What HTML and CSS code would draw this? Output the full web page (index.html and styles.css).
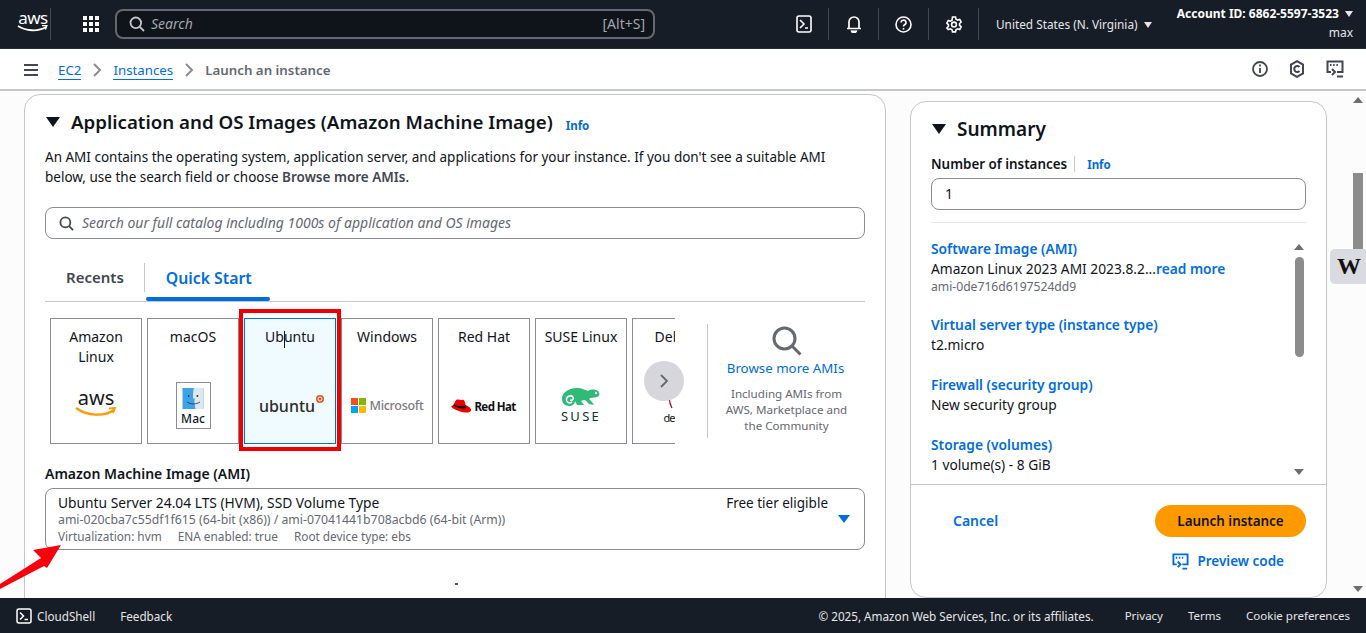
FILE: index.html
```html
<!DOCTYPE html>
<html lang="en">
<head>
  <meta charset="UTF-8">
  <title>Launch an instance | EC2</title>
  <link rel="stylesheet" href="styles.css">
</head>
<body>
<header class="topnav">
  <div class="aws-logo">
    <span class="aws-word">aws</span>
    <svg width="32" height="8" viewBox="0 0 32 8"><path d="M1 1c8 5 20 6 28 1" fill="none" stroke="#fff" stroke-width="1.8"/><path d="M25 .6l5-.4-1.6 4.4" fill="none" stroke="#fff" stroke-width="1.4"/></svg>
  </div>
  <div class="nav-sep sep-logo"></div>
  <svg class="grid-icon" width="16" height="16" viewBox="0 0 16 16" fill="#fff">
    <rect width="4" height="4"/><rect x="6" width="4" height="4"/><rect x="12" width="4" height="4"/>
    <rect y="6" width="4" height="4"/><rect x="6" y="6" width="4" height="4"/><rect x="12" y="6" width="4" height="4"/>
    <rect y="12" width="4" height="4"/><rect x="6" y="12" width="4" height="4"/><rect x="12" y="12" width="4" height="4"/>
  </svg>
  <div class="nav-search">
    <svg width="16" height="16" viewBox="0 0 16 16" fill="none" stroke="#c6c6cd" stroke-width="1.8"><circle cx="6.8" cy="6.8" r="5.3"/><path d="M10.8 10.8l4.2 4.2"/></svg>
    <span class="nav-search-text">Search</span>
    <span class="nav-shortcut">[Alt+S]</span>
  </div>
  <div class="nav-icon icon-first">
    <svg width="16" height="18" viewBox="0 0 16 18" fill="none" stroke="#fff" stroke-width="1.6"><rect x="1" y="1" width="14" height="16" rx="2"/><path d="M4 5l4 4-4 4M9 13h3"/></svg>
  </div>
  <div class="nav-icon">
    <svg width="16" height="18" viewBox="0 0 16 18" fill="none" stroke="#fff" stroke-width="1.7"><path d="M3 13V7a5 5 0 0 1 10 0v6M1 13.5h14"/><path d="M5.5 15.5a2.5 2 0 0 0 5 0" fill="#fff"/></svg>
  </div>
  <div class="nav-icon">
    <svg width="17" height="17" viewBox="0 0 17 17" fill="none" stroke="#fff" stroke-width="1.6"><circle cx="8.5" cy="8.5" r="7.5"/><path d="M6 6.5a2.5 2.4 0 1 1 3.6 2.2c-.8.4-1.100.9-1.100 1.800"/><path d="M8.500 12v1.600"/></svg>
  </div>
  <div class="nav-icon">
    <svg width="16" height="17" viewBox="0 0 16 17" fill="none" stroke="#fff" stroke-width="1.6"><path d="M6.500 1h3l.5 2.200 1.600.9 2.100-.7 1.500 2.600-1.600 1.500v1.900l1.600 1.500-1.500 2.600-2.100-.7-1.600.9-.5 2.200h-3l-.5-2.200-1.600-.9-2.100.7L.8 12l1.600-1.500V8.600L.8 7.100l1.500-2.600 2.100.7L6 4.300z"/><circle cx="8" cy="8.500" r="2.400"/></svg>
  </div>
  <div class="nav-region">United States (N. Virginia) <span class="caret-small"></span></div>
  <div class="nav-account">
    <div class="acct-id">Account ID: 6862-5597-3523 <span class="caret-small"></span></div>
    <div class="acct-user">max</div>
  </div>
</header>

<nav class="crumbbar">
  <div class="hamburger"><span></span><span></span><span></span></div>
  <a class="crumb-link crumb-ec2">EC2</a>
  <svg class="crumb-chev" width="10" height="14" viewBox="0 0 10 14" fill="none" stroke="#8c8c94" stroke-width="2"><path d="M2 1l6 6-6 6"/></svg>
  <a class="crumb-link">Instances</a>
  <svg class="crumb-chev" width="10" height="14" viewBox="0 0 10 14" fill="none" stroke="#8c8c94" stroke-width="2"><path d="M2 1l6 6-6 6"/></svg>
  <span class="crumb-current">Launch an instance</span>
  <div class="crumb-icons">
    <svg width="16" height="16" viewBox="0 0 16 16" fill="none" stroke="#424650" stroke-width="1.8"><circle cx="8" cy="8" r="7"/><path d="M8 7v5M8 3.600v2"/></svg>
    <svg width="16" height="18" viewBox="0 0 16 18" fill="none" stroke="#424650" stroke-width="2"><path d="M8 1.200l6 3.400v8.800l-6 3.400-6-3.400V4.600z"/><path d="M10.500 7a3 3 0 1 0 0 4"/></svg>
    <svg width="18" height="18" viewBox="0 0 18 18" fill="none" stroke="#424650" stroke-width="2"><path d="M5 12H1.500V1.500h15V12H11"/><path d="M4 5h1.500M7.200 5h1.500M10.400 5h1.500"/><path d="M6 9l3 3-3 3M11 16.500h6"/></svg>
  </div>
</nav>

<main class="content">
  <div class="left-col">
    <section class="card ami-card">
      <div class="card-head">
        <span class="caret-big"></span>
        <h2 class="card-title">Application and OS Images (Amazon Machine Image)</h2>
        <a class="info-link">Info</a>
      </div>
      <p class="card-desc">An AMI contains the operating system, application server, and applications for your instance. If you don't see a suitable AMI below, use the search field or choose <b>Browse more AMIs</b>.</p>
      <div class="catalog-search">
        <svg width="15" height="15" viewBox="0 0 16 16" fill="none" stroke="#424650" stroke-width="1.900"><circle cx="6.800" cy="6.800" r="5.300"/><path d="M10.800 10.800l4.200 4.200"/></svg>
        <span>Search our full catalog including 1000s of application and OS images</span>
      </div>
      <div class="tabs">
        <div class="tab">Recents</div>
        <div class="tab tab-active">Quick Start</div>
      </div>
      <div class="picker">
        <div class="tile-strip">
          <div class="tile">
            <div class="tile-name">Amazon Linux</div>
            <div class="tile-logo">
              <svg width="44" height="30" viewBox="0 0 44 30">
                <text x="22" y="16" class="logo-aws">aws</text>
                <path d="M2 19c11 8 28 9 38 2" fill="none" stroke="#f90" stroke-width="2.200"/>
                <path d="M35 19.500l6-.5-2 5" fill="none" stroke="#f90" stroke-width="1.800"/>
              </svg>
            </div>
          </div>
          <div class="tile">
            <div class="tile-name">macOS</div>
            <div class="tile-logo logo-mac">
              <div class="mac-box">
                <svg width="24" height="24" viewBox="0 0 24 24"><rect width="24" height="24" fill="#3ba4e6"/><path d="M13 0h11v24H15c-1-4-2-8-1-12h-2c0-4 0-8 1-12z" fill="#dfe7ee"/><circle cx="7" cy="9" r="1" fill="#123"/><circle cx="17" cy="9" r="1" fill="#123"/><path d="M5 16c5 3 10 3 15 0" stroke="#235" fill="none"/></svg>
                <span>Mac</span>
              </div>
            </div>
          </div>
          <div class="tile tile-selected">
            <div class="tile-name">Ubuntu</div>
            <span class="text-cursor"></span>
            <div class="tile-logo">
              <span class="logo-ubuntu">ubuntu</span><svg class="ubuntu-dot" width="8" height="8" viewBox="0 0 8 8"><circle cx="4" cy="4" r="4" fill="#e95420"/><circle cx="4" cy="4" r="2" fill="none" stroke="#fff"/></svg>
            </div>
          </div>
          <div class="tile">
            <div class="tile-name">Windows</div>
            <div class="tile-logo logo-ms">
              <svg width="15" height="15" viewBox="0 0 15 15"><rect width="7" height="7" fill="#f25022"/><rect x="8" width="7" height="7" fill="#7fba00"/><rect y="8" width="7" height="7" fill="#00a4ef"/><rect x="8" y="8" width="7" height="7" fill="#ffb900"/></svg>
              <span>Microsoft</span>
            </div>
          </div>
          <div class="tile">
            <div class="tile-name">Red Hat</div>
            <div class="tile-logo logo-rh">
              <svg width="21" height="16" viewBox="0 0 21 16"><path d="M6 1c2-1 4 0 6 0 2-1 3 1 3.500 5 2 .800 5 2.500 5.500 4.500.300 2-2 3.500-6 3C10 13 3 10 1.500 8c-.500-1 .500-1.500 1.500-1.500z" fill="#e00"/><path d="M3 6.500c3 2 8 3.500 12.700 3 .300-.700.200-1.800-.200-3-3 .700-8 .700-10.500-.800z" fill="#111"/></svg>
              <span>Red Hat</span>
            </div>
          </div>
          <div class="tile">
            <div class="tile-name">SUSE Linux</div>
            <div class="tile-logo logo-suse">
              <svg width="38" height="18" viewBox="0 0 38 18"><path d="M0 11C0 4 7 0 15 0c5 0 8 2 11 3 2-2 7-2 10 0 2 2 2 5-1 6-3 1-6 0-8 2 2 2 4 4 5 6l-5-1c-2-2-3-4-5-4l-3 1 3 4h-7l-2-4c0 3-3 5-6 5-4 0-7-3-7-7z" fill="#30ba78"/><path d="M10 14c-3 2-6 0-5.500-3 .500-3 4.500-4 6.500-2 1 2-1 4-3 3" fill="none" stroke="#fff" stroke-width="1.600"/><circle cx="34" cy="5" r="1.200" fill="#fff"/></svg>
              <span>SUSE</span>
            </div>
          </div>
          <div class="tile">
            <div class="tile-name">Debian</div>
            <div class="tile-logo logo-deb">
              <svg width="28" height="20" viewBox="0 0 28 20"><path d="M11 1C6 3 3 10 8 19" fill="none" stroke="#a80030" stroke-width="1.200"/></svg>
              <span>debian</span>
            </div>
          </div>
        </div>
        <div class="next-btn">
          <svg width="10" height="14" viewBox="0 0 10 14" fill="none" stroke="#656871" stroke-width="1.800"><path d="M2 1l6 6-6 6"/></svg>
        </div>
        <div class="browse">
          <svg width="30" height="30" viewBox="0 0 30 30" fill="none" stroke="#656871" stroke-width="3"><circle cx="12.500" cy="12.500" r="10.500"/><path d="M20 20l8.500 8.500"/></svg>
          <a class="browse-link">Browse more AMIs</a>
          <p class="browse-note">Including AMIs from AWS, Marketplace and the Community</p>
        </div>
      </div>
      <div class="ami-label">Amazon Machine Image (AMI)</div>
      <div class="ami-select">
        <div class="ami-select-top">
          <span class="ami-name">Ubuntu Server 24.04 LTS (HVM), SSD Volume Type</span>
          <span class="ami-free">Free tier eligible</span>
        </div>
        <div class="ami-meta">ami-020cba7c55df1f615 (64-bit (x86)) / ami-07041441b708acbd6 (64-bit (Arm))</div>
        <div class="ami-tags"><span>Virtualization: hvm</span><span>ENA enabled: true</span><span>Root device type: ebs</span></div>
        <span class="ami-caret"></span>
      </div>
      <span class="stray-dot"></span>
    </section>
  </div>

  <aside class="summary">
    <div class="summary-top">
      <div class="summary-head"><span class="caret-big"></span><h2 class="summary-title">Summary</h2></div>
      <div class="count-label"><b>Number of instances</b><a class="info-link">Info</a></div>
      <div class="count-input">1</div>
    </div>
    <div class="summary-list">
      <div class="summary-items">
        <div class="sum-item"><a class="sum-link">Software Image (AMI)</a><div>Amazon Linux 2023 AMI 2023.8.2...<a class="sum-link">read more</a></div><div class="sum-sub">ami-0de716d6197524dd9</div></div>
        <div class="sum-item"><a class="sum-link">Virtual server type (instance type)</a><div>t2.micro</div></div>
        <div class="sum-item"><a class="sum-link">Firewall (security group)</a><div>New security group</div></div>
        <div class="sum-item"><a class="sum-link">Storage (volumes)</a><div>1 volume(s) - 8 GiB</div></div>
      </div>
      <div class="mini-scroll">
        <span class="arrow-up"></span>
        <div class="mini-track"><div class="mini-thumb"></div></div>
        <span class="arrow-down"></span>
      </div>
    </div>
    <div class="summary-actions">
      <div class="action-row">
        <a class="cancel-link">Cancel</a>
        <button class="launch-btn">Launch instance</button>
      </div>
      <a class="preview-link">
        <svg width="17" height="17" viewBox="0 0 18 18" fill="none" stroke="#006ce0" stroke-width="2"><path d="M5 12H1.500V1.500h15V12H11"/><path d="M4 5h1.500M7.200 5h1.500M10.400 5h1.500"/><path d="M6 9l3 3-3 3M11 16.500h5"/></svg>
        Preview code
      </a>
    </div>
  </aside>

  <div class="page-scroll">
    <span class="arrow-up"></span>
    <div class="page-track"><div class="page-thumb"></div></div>
    <span class="arrow-down"></span>
  </div>
  <div class="w-tab">W</div>
</main>

<footer class="bottombar">
  <svg width="16" height="16" viewBox="0 0 16 16" fill="none" stroke="#fff" stroke-width="1.500"><rect x="1" y="1" width="14" height="14" rx="2"/><path d="M4 4.500l3.500 3.500L4 11.500M8.500 11.500h3.500"/></svg>
  <span class="foot-cloud">CloudShell</span>
  <span class="foot-feedback">Feedback</span>
  <span class="foot-copy">© 2025, Amazon Web Services, Inc. or its affiliates.</span>
  <span class="foot-link">Privacy</span>
  <span class="foot-link">Terms</span>
  <span class="foot-link">Cookie preferences</span>
</footer>

<!-- annotations drawn on top of the screenshot -->
<div class="red-box"></div>
<svg class="red-arrow" width="64" height="48" viewBox="0 0 64 48"><path d="M61 2L33 7l8 8L0 41v5l44-23 3 2z" fill="#f8000c"/></svg>
</body>
</html>
```

FILE: styles.css
```css
* {
  box-sizing: border-box;
}

html, body {
  margin: 0;
  height: 633px;
  overflow: hidden;
}

body {
  display: flex;
  flex-direction: column;
  font-family: "Noto Sans", "Open Sans", sans-serif;
  font-size: 14px;
  line-height: 20px;
  color: #0f141a;
  background: #fcfcfd;
  position: relative;
}

p, h2 {
  margin: 0;
}

/* top nav */
.topnav {
  height: 49px;
  flex: none;
  display: flex;
  align-items: center;
  background: #161d26;
  border-bottom: 1px solid #232b37;
  color: #fff;
  padding-left: 17px;
}

.aws-logo {
  width: 32px;
  display: flex;
  flex-direction: column;
  align-items: center;
}

.aws-word {
  font-size: 17px;
  line-height: 14px;
  letter-spacing: -0.5px;
  margin-top: -4px;
}

.nav-sep {
  width: 1px;
  height: 32px;
  background: #424650;
}

.sep-logo {
  margin-left: 1px;
}

.grid-icon {
  margin-left: 32px;
}

.nav-search {
  width: 540px;
  height: 30px;
  margin-left: 16px;
  display: flex;
  align-items: center;
  gap: 6px;
  padding: 0 8px 0 12px;
  background: #0f141a;
  border: 2px solid #656871;
  border-radius: 8px;
}

.nav-search-text {
  font-style: italic;
  font-size: 14px;
  color: #a4a4ad;
}

.nav-shortcut {
  margin-left: auto;
  font-size: 14px;
  color: #a4a4ad;
}

.nav-icon {
  width: 50px;
  height: 32px;
  display: flex;
  align-items: center;
  justify-content: center;
  border-right: 1px solid #424650;
}

.icon-first {
  margin-left: 124px;
}

.nav-region {
  margin-left: 17px;
  font-size: 11.8px;
  color: #e6e6e9;
  white-space: nowrap;
}

.caret-small {
  display: inline-block;
  margin-left: 3px;
  border-left: 4.5px solid transparent;
  border-right: 4.5px solid transparent;
  border-top: 6px solid #e6e6e9;
  vertical-align: 1px;
}

.nav-account {
  margin: -3px 0 0 auto;
  padding-right: 13px;
  text-align: right;
  font-size: 12px;
  line-height: 19px;
}

.acct-id {
  font-weight: 700;
  white-space: nowrap;
}

.acct-user {
  color: #e6e6e9;
}

/* breadcrumb bar */
.crumbbar {
  height: 42px;
  flex: none;
  display: flex;
  align-items: center;
  padding: 2px 0 0 24px;
  background: #fff;
  border-bottom: 2px solid #c6c6cd;
  font-size: 13.3px;
}

.hamburger {
  width: 14px;
  display: flex;
  flex-direction: column;
  gap: 3px;
  margin-right: 20px;
}

.hamburger span {
  height: 2px;
  background: #424650;
}

.crumb-link {
  color: #006ce0;
  border-bottom: 1px solid #006ce0;
  line-height: 18px;
}

.crumb-chev {
  margin: 0 11px;
}

.crumb-current {
  font-weight: 600;
  color: #656871;
}

.crumb-icons {
  margin-left: auto;
  display: flex;
  align-items: center;
  gap: 21px;
  padding: 0 22px 2px 0;
}

/* main area */
.content {
  height: 507px;
  flex: none;
  display: flex;
  position: relative;
  overflow: hidden;
}

.left-col {
  padding: 3px 0 0 24px;
  width: 886px;
  flex: none;
}

.card {
  background: #fff;
  border: 1px solid #c6c6cd;
  border-radius: 16px;
}

.ami-card {
  height: 560px;
  padding: 0 20px;
  position: relative;
}

.card-head {
  display: flex;
  align-items: center;
  height: 28px;
  margin-top: 13px;
  padding-left: 1px;
}

.caret-big {
  flex: none;
  border-left: 7px solid transparent;
  border-right: 7px solid transparent;
  border-top: 10px solid #0f141a;
}

.card-title {
  margin-left: 11px;
  font-size: 18.7px;
  font-weight: 600;
  line-height: 28px;
  white-space: nowrap;
}

.info-link {
  color: #006ce0;
  font-size: 11.5px;
  font-weight: 700;
}

.card-head .info-link {
  margin: 8px 0 0 13px;
}

.card-desc {
  margin-top: 11px;
  font-size: 13.5px;
}

.card-desc b {
  font-weight: 600;
  color: #424650;
}

.catalog-search {
  margin-top: 20px;
  height: 32px;
  display: flex;
  align-items: center;
  gap: 8px;
  padding-left: 13px;
  border: 1px solid #8c8c94;
  border-radius: 8px;
  font-style: italic;
  color: #656871;
}

.tabs {
  display: flex;
  height: 39px;
  margin-top: 24px;
  border-bottom: 1px solid #c6c6cd;
}

.tab {
  position: relative;
  height: 29px;
  padding: 0 20px 0 21px;
  font-weight: 600;
  font-size: 15px;
  line-height: 29px;
  color: #424650;
  border-right: 1px solid #c6c6cd;
}

.tab-active {
  padding: 0 18px 0 21px;
  font-size: 15.8px;
  line-height: 31px;
  color: #006ce0;
  border-right: none;
}

.tab-active::after {
  content: "";
  position: absolute;
  left: 1px;
  right: 0;
  bottom: -9px;
  height: 4px;
  background: #006ce0;
  border-radius: 2px;
}

.picker {
  display: flex;
  position: relative;
  height: 126px;
  margin-top: 16px;
  padding-left: 5px;
}

.tile-strip {
  width: 625px;
  flex: none;
  display: flex;
  gap: 5px;
  overflow: hidden;
}

.tile {
  position: relative;
  width: 92px;
  height: 126px;
  flex: none;
  border: 1px solid #8c8c94;
  text-align: center;
  padding-top: 8px;
  background: #fff;
  display: flex;
  flex-direction: column;
  align-items: center;
}

.tile-selected {
  background: #f0fbff;
  border-color: #006ce0;
}

.tile-name {
  width: 80px;
  flex: none;
  white-space: normal;
}

.text-cursor {
  position: absolute;
  left: 39px;
  top: 12px;
  width: 1px;
  height: 17px;
  background: #0f141a;
}

.tile-logo {
  position: absolute;
  left: 0;
  right: 0;
  top: 60px;
  height: 50px;
  display: flex;
  align-items: center;
  justify-content: center;
}

.logo-aws {
  font-size: 20px;
  text-anchor: middle;
  fill: #16191f;
  font-family: "Noto Sans", sans-serif;
}

.logo-mac {
  padding-top: 2px;
}

.mac-box {
  width: 35px;
  height: 47px;
  border: 1px solid #8c8c94;
  display: flex;
  flex-direction: column;
  align-items: center;
  padding-top: 5px;
  font-size: 12px;
  font-weight: 500;
  line-height: 19px;
  color: #16191f;
}

.logo-ubuntu {
  font-size: 16px;
  font-weight: 500;
  line-height: 24px;
  color: #2c2c2c;
  padding: 3px 0 0 3px;
}

.ubuntu-dot {
  align-self: flex-start;
  margin: 16px 0 0 1px;
}

.logo-ms {
  gap: 4px;
  padding-top: 3px;
}

.logo-ms span {
  font-size: 12.5px;
  font-weight: 500;
  color: #7a7a7a;
  letter-spacing: -0.3px;
}

.logo-rh {
  gap: 3px;
  padding: 6px 2px 0 0;
}

.logo-rh span {
  font-size: 11.500px;
  font-weight: 700;
  color: #111;
  letter-spacing: -0.6px;
}

.logo-suse {
  flex-direction: column;
  padding-top: 4px;
}

.logo-suse span {
  font-size: 13px;
  line-height: 16px;
  letter-spacing: 2.300px;
  color: #0c322c;
  margin-top: 2px;
}

.logo-deb {
  flex-direction: column;
  padding-top: 6px;
}

.logo-deb span {
  margin-top: 2px;
  font-size: 11px;
  line-height: 14px;
  letter-spacing: -1.100px;
}

.next-btn {
  position: absolute;
  left: 599px;
  top: 43px;
  width: 40px;
  height: 40px;
  border-radius: 50%;
  background: #d6d6dc;
  display: flex;
  align-items: center;
  justify-content: center;
}

.browse {
  width: 158px;
  margin: 6px 0 6px 32px;
  border-left: 1px solid #c6c6cd;
  display: flex;
  flex-direction: column;
  align-items: center;
  text-align: center;
  flex: none;
}

.browse svg {
  margin-top: 2px;
}

.browse-link {
  margin-top: 2px;
  margin-right: 2px;
  font-size: 13.300px;
  color: #006ce0;
  white-space: nowrap;
}

.browse-note {
  margin-top: 8px;
  width: 130px;
  font-size: 11.600px;
  line-height: 16px;
  color: #656871;
}

.ami-label {
  margin-top: 20px;
  font-weight: 600;
}

.ami-select {
  position: relative;
  height: 62px;
  margin-top: 4px;
  padding: 4px 36px 0 12px;
  border: 1px solid #8c8c94;
  border-radius: 8px;
}

.ami-select-top {
  display: flex;
  justify-content: space-between;
}

.ami-name {
  font-size: 13.800px;
}

.ami-free {
  font-size: 13.500px;
}

.ami-meta {
  margin-top: -1px;
  font-size: 12.270px;
  line-height: 16px;
  color: #656871;
}

.ami-tags {
  display: flex;
  gap: 16px;
  font-size: 11.800px;
  line-height: 16px;
  color: #656871;
}

.ami-caret {
  position: absolute;
  right: 14px;
  top: 26px;
  border-left: 6px solid transparent;
  border-right: 6px solid transparent;
  border-top: 8px solid #006ce0;
}

.stray-dot {
  position: absolute;
  left: 430px;
  top: 488px;
  width: 3px;
  height: 2px;
  background: #555;
}

/* summary panel */
.summary {
  width: 417px;
  height: 497px;
  margin: 10px 0 0 24px;
  flex: none;
  background: #fff;
  border: 1px solid #c6c6cd;
  border-radius: 16px;
  display: flex;
  flex-direction: column;
}

.summary-top {
  padding: 13px 20px 0;
  height: 120px;
}

.summary-head {
  display: flex;
  align-items: center;
  height: 28px;
  padding-left: 1px;
}

.summary-title {
  margin-left: 11px;
  font-size: 19px;
  font-weight: 600;
}

.count-label {
  display: flex;
  align-items: center;
  margin-top: 11px;
  height: 20px;
}

.count-label b {
  font-size: 13.400px;
  font-weight: 600;
  padding-right: 7px;
  margin-right: 12px;
  border-right: 1px solid #c6c6cd;
  line-height: 16px;
}

.count-label .info-link {
  margin-top: 2px;
}

.count-input {
  margin-top: 4px;
  height: 32px;
  padding: 5px 13px;
  border: 1px solid #8c8c94;
  border-radius: 8px;
}

.summary-list {
  height: 262px;
  margin: 0 20px;
  border-top: 1px solid #e6e6e9;
  display: flex;
  overflow: hidden;
  font-size: 13.750px;
}

.summary-items {
  flex: 1;
  padding-top: 16px;
  white-space: nowrap;
}

.sum-item {
  height: 60px;
}

.sum-item:first-child {
  height: 76px;
}

.sum-link {
  color: #006ce0;
  font-weight: 600;
}

.sum-sub {
  font-size: 12.150px;
  line-height: 16px;
  color: #656871;
}

.mini-scroll {
  width: 12px;
  padding-top: 21px;
  margin-right: 1px;
  display: flex;
  flex-direction: column;
  align-items: center;
  height: 252px;
}

.mini-track {
  flex: 1;
  margin: 7px 0 4px;
  width: 9px;
}

.mini-thumb {
  height: 100px;
  background: #8c8c8c;
  border-radius: 5px;
}

.arrow-up {
  border-left: 5px solid transparent;
  border-right: 5px solid transparent;
  border-bottom: 6px solid #6e6e6e;
}

.arrow-down {
  border-left: 5px solid transparent;
  border-right: 5px solid transparent;
  border-top: 6px solid #6e6e6e;
}

.summary-actions {
  flex: 1;
  border-top: 1px solid #c6c6cd;
  padding: 20px 20px 0 42px;
}

.action-row {
  display: flex;
  align-items: center;
  justify-content: space-between;
}

.cancel-link {
  font-weight: 600;
  color: #006ce0;
}

.launch-btn {
  width: 151px;
  height: 32px;
  border: none;
  border-radius: 16px;
  background: #ff9900;
  color: #0f141a;
  font: 600 13.400px "Noto Sans", sans-serif;
}

.preview-link {
  display: flex;
  align-items: center;
  justify-content: flex-end;
  gap: 8px;
  margin: 14px 22px 0 0;
  color: #006ce0;
  font-size: 13.500px;
  font-weight: 600;
}

/* page scrollbar */
.page-scroll {
  margin-left: auto;
  width: 17px;
  height: 507px;
  padding: 6px 0;
  display: flex;
  flex-direction: column;
  align-items: center;
}

.page-track {
  flex: 1;
  width: 10px;
  padding-top: 70px;
}

.page-thumb {
  height: 80px;
  background: #8c8c8c;
}

.w-tab {
  position: absolute;
  right: 0;
  top: 158px;
  width: 36px;
  height: 35px;
  padding-left: 7px;
  background: #d9dbe0;
  border-radius: 5px 0 0 5px;
  font: 700 24px/35px "Liberation Serif", serif;
  color: #111;
}

/* footer */
.bottombar {
  height: 35px;
  flex: none;
  display: flex;
  align-items: center;
  padding: 1px 16px 0;
  background: #161d26;
  color: #e6e6e9;
  font-size: 11.700px;
}

.foot-cloud {
  margin-left: 5px;
}

.foot-feedback {
  margin-left: 25px;
}

.foot-copy {
  margin-left: auto;
  margin-right: 6px;
}

.foot-link {
  margin-left: 25px;
  font-size: 11.500px;
}

/* annotations */
.red-box {
  position: absolute;
  left: 239px;
  top: 309px;
  width: 102px;
  height: 142px;
  border: 4px solid #ee0000;
}

.red-arrow {
  position: absolute;
  left: 0;
  top: 543px;
}
```
